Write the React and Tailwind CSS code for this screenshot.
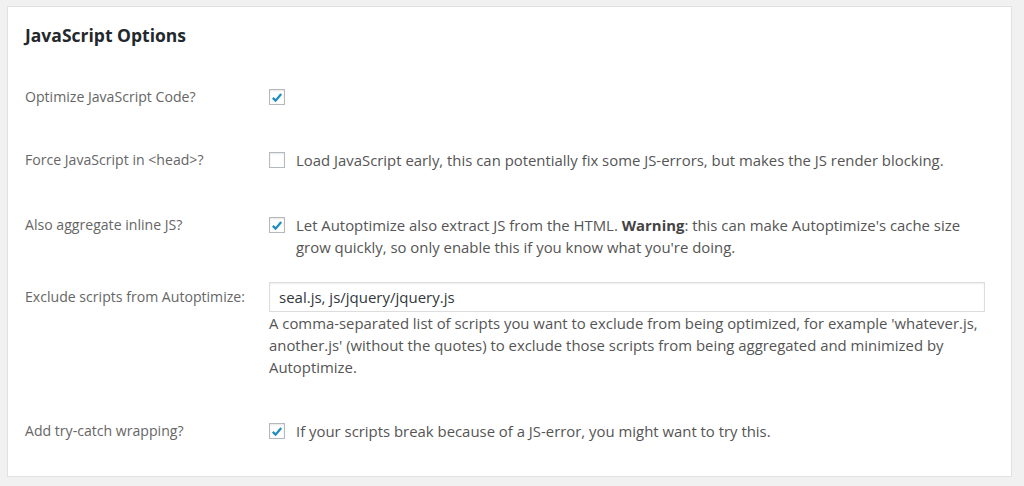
import React from "react";

function Check({ checked }) {
  return (
    <span className="inline-flex h-4 w-4 shrink-0 items-center justify-center border border-[#b4b9be] bg-white shadow-[inset_0_1px_2px_rgba(0,0,0,0.1)]">
      {checked && (
        <svg viewBox="0 0 20 20" className="h-[15px] w-[15px]">
          <path d="M4 10.5 L8 14.5 L16 5" fill="none" stroke="#1e8cbe" strokeWidth="3.2" strokeLinecap="butt" strokeLinejoin="miter" />
        </svg>
      )}
    </span>
  );
}

function Row({ label, children, className = "" }) {
  return (
    <div className={"flex " + className}>
      <div className="w-[244px] shrink-0 text-[14.1px] leading-[22px] text-[#666]">{label}</div>
      <div className="flex-1 text-[14.9px]">{children}</div>
    </div>
  );
}

export default function App() {
  return (
    <div
      className="h-[486px] w-[1024px] bg-[#f1f1f1] pl-[7px] pt-[6px]"
      style={{ fontFamily: '"Open Sans", "Noto Sans", sans-serif' }}
    >
      <div className="h-[471px] w-[1005px] border border-[#e1e1e1] bg-white pl-[17px] pt-[16px]">
        <h2 className="text-[17.5px] font-bold leading-[24px] text-[#23282d]">JavaScript Options</h2>

        <Row label="Optimize JavaScript Code?" className="mt-[39px]">
          <div className="flex h-[22px] items-center">
            <Check checked />
          </div>
        </Row>

        <Row label="Force JavaScript in <head>?" className="mt-[41px]">
          <div className="flex items-start gap-[11px] leading-[22px] text-[#555]">
            <div className="flex h-[22px] items-center"><Check /></div>
            <span className="whitespace-nowrap">Load JavaScript early, this can potentially fix some JS-errors, but makes the JS render blocking.</span>
          </div>
        </Row>

        <Row label="Also aggregate inline JS?" className="mt-[43px]">
          <div className="flex items-start gap-[11px] leading-[22px] text-[#555]">
            <div className="flex h-[22px] items-center"><Check checked /></div>
            <span className="whitespace-nowrap">
              Let Autoptimize also extract JS from the HTML. <b className="font-bold text-[#444]">Warning</b>: this can make Autoptimize's cache size
              <br />
              grow quickly, so only enable this if you know what you're doing.
            </span>
          </div>
        </Row>

        <Row label={<div className="pt-[4px]">Exclude scripts from Autoptimize:</div>} className="mt-[24px]">
          <div className="flex h-[30px] w-[716px] items-center border border-[#ddd] bg-white px-[9px] text-[15px] text-[#32373c] shadow-[inset_0_1px_2px_rgba(0,0,0,0.07)]">
            seal.js, js/jquery/jquery.js
          </div>
          <p className="whitespace-nowrap leading-[22px] text-[#555]">
            A comma-separated list of scripts you want to exclude from being optimized, for example 'whatever.js,
            <br />
            another.js' (without the quotes) to exclude those scripts from being aggregated and minimized by
            <br />
            Autoptimize.
          </p>
        </Row>

        <Row label="Add try-catch wrapping?" className="mt-[42px]">
          <div className="flex items-start gap-[11px] leading-[22px] text-[#555]">
            <div className="flex h-[22px] items-center"><Check checked /></div>
            <span className="whitespace-nowrap">If your scripts break because of a JS-error, you might want to try this.</span>
          </div>
        </Row>
      </div>
    </div>
  );
}
